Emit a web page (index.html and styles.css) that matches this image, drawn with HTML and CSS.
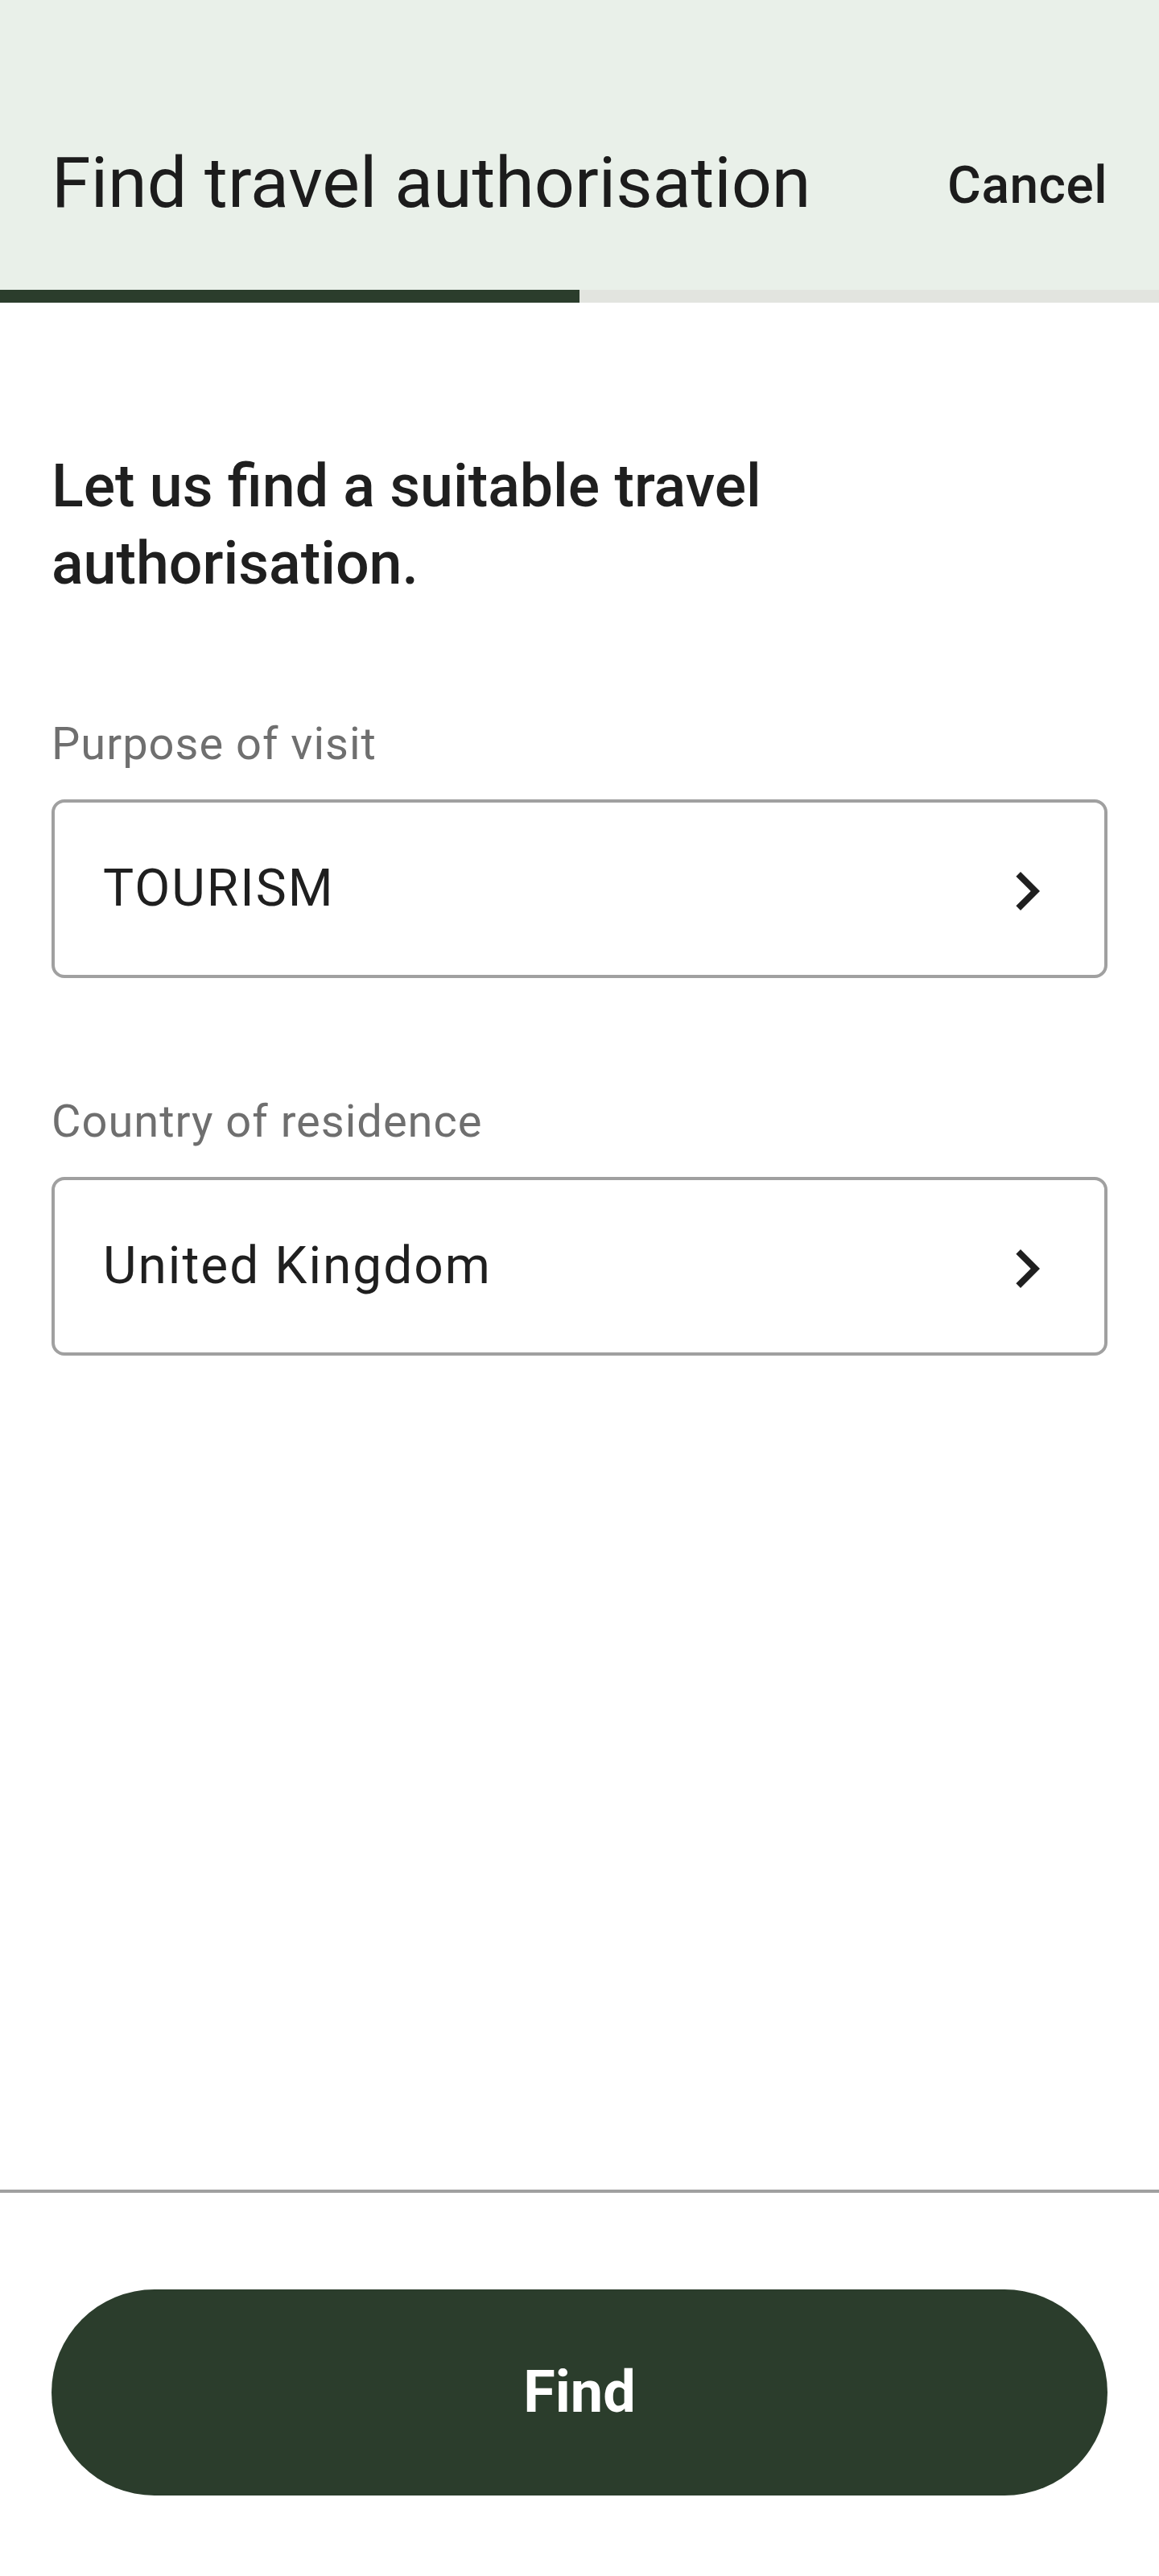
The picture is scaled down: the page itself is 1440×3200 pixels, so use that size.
FILE: index.html
```html
<!DOCTYPE html>
<html lang="en">
<head>
<meta charset="utf-8">
<title>Find travel authorisation</title>
<link rel="stylesheet" href="styles.css">
</head>
<body>
<div class="screen">
  <header class="appbar">
    <div class="toolbar">
      <h1 class="title">Find travel authorisation</h1>
      <button class="cancel">Cancel</button>
    </div>
  </header>
  <div class="progress"><div class="progress-fill" style="width:50%"></div></div>

  <main class="content">
    <h2 class="intro">Let us find a suitable travel authorisation.</h2>

    <div class="field">
      <div class="label">Purpose of visit</div>
      <div class="select">
        <span class="value">TOURISM</span>
        <svg class="chev" viewBox="0 0 24 24" width="96" height="96"><path d="M10 6L8.59 7.41 13.17 12l-4.58 4.59L10 18l6-6z" fill="#1f1f1f"/></svg>
      </div>
    </div>

    <div class="field">
      <div class="label">Country of residence</div>
      <div class="select">
        <span class="value">United Kingdom</span>
        <svg class="chev" viewBox="0 0 24 24" width="96" height="96"><path d="M10 6L8.59 7.41 13.17 12l-4.58 4.59L10 18l6-6z" fill="#1f1f1f"/></svg>
      </div>
    </div>
  </main>

  <footer class="footer">
    <button class="primary">Find</button>
  </footer>
</div>
</body>
</html>
```

FILE: styles.css
```css
* { box-sizing: border-box; }
html, body { margin: 0; padding: 0; background: #ffffff; }
body {
  font-family: Roboto, "Noto Sans", "Liberation Sans", sans-serif;
  color: #1f1f1f;
}
.screen {
  width: 1440px;
  height: 3200px;
  display: flex;
  flex-direction: column;
}
.appbar {
  background: #e9f0e9;
  padding-top: 96px;
}
.toolbar {
  height: 264px;
  padding: 0 64px;
  display: flex;
  align-items: center;
  justify-content: space-between;
}
.title {
  margin: 0;
  font-size: 88px;
  font-weight: 400;
  line-height: 112px;
  color: #1c1c1c;
  padding-bottom: 2px;
}
.cancel {
  border: 0;
  background: transparent;
  padding: 6px 0 0 0;
  font-family: inherit;
  font-size: 64px;
  font-weight: 500;
  line-height: 80px;
  color: #1c1c1c;
  letter-spacing: 0.5px;
}
.progress {
  height: 16px;
  background: #e2e4df;
}
.progress-fill {
  height: 100%;
  background: #2b3d2c;
}
.content {
  flex: 1;
  padding: 180px 64px 0 64px;
}
.intro {
  margin: 0 0 140px 0;
  font-size: 73.5px;
  font-weight: 500;
  line-height: 96px;
  color: #1f1f1f;
  max-width: 1000px;
}
.field { margin-bottom: 142px; }
.label {
  font-size: 56px;
  line-height: 72px;
  color: #6f6f6f;
  letter-spacing: 1px;
  margin-bottom: 33px;
}
.select {
  height: 222px;
  border: 4px solid #a0a0a0;
  border-radius: 16px;
  padding: 0 48px 0 60px;
  display: flex;
  align-items: center;
  justify-content: space-between;
}
.value {
  font-size: 64px;
  line-height: 80px;
  color: #1f1f1f;
  letter-spacing: 2px;
}
.chev { display: block; flex: none; margin-top: 6px; }
.footer {
  border-top: 4px solid #a0a0a0;
  padding: 120px 64px 100px 64px;
}
.primary {
  display: block;
  width: 100%;
  height: 256px;
  border: 0;
  border-radius: 128px;
  background: #2b3d2c;
  color: #ffffff;
  font-family: inherit;
  font-size: 72px;
  font-weight: 700;
  line-height: 96px;
}
```
